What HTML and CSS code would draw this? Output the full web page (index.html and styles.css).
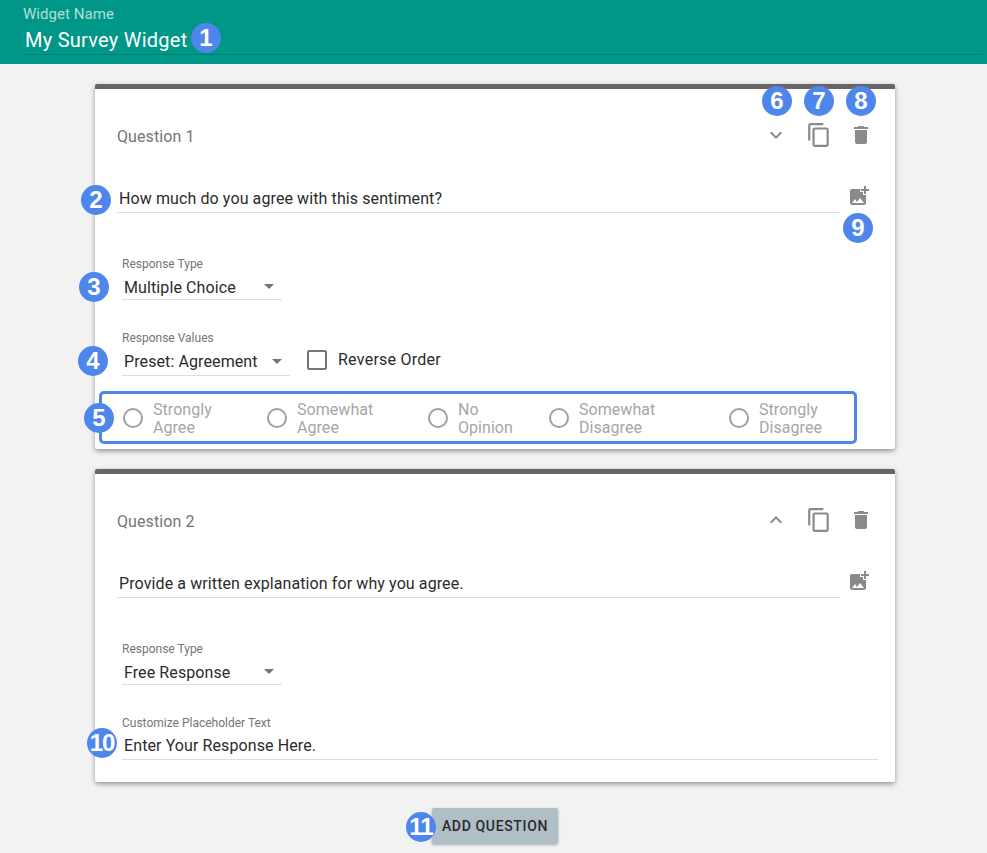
FILE: index.html
```html
<!DOCTYPE html>
<html lang="en">
<head>
    <meta charset="UTF-8">
    <meta name="viewport" content="width=device-width, initial-scale=1.0">
    <title>Survey Widget Builder</title>
    <link rel="stylesheet" href="styles.css">
</head>
<body>

<header class="topbar">
    <div class="topbar-label">Widget Name</div>
    <div class="topbar-field">
        My Survey Widget
        <span class="badge badge-1">1</span>
    </div>
</header>

<main class="content">
    <section class="card">
        <span class="badge badge-2">2</span>
        <span class="badge badge-3">3</span>
        <span class="badge badge-4">4</span>
        <span class="badge badge-5">5</span>
        <span class="badge badge-6">6</span>
        <span class="badge badge-7">7</span>
        <span class="badge badge-8">8</span>
        <span class="badge badge-9">9</span>

        <div class="card-head">
            <div class="card-title">Question 1</div>
            <div class="card-actions">
                <svg class="icon" viewBox="0 0 24 24"><path d="M16.59 8.59L12 13.17 7.41 8.59 6 10l6 6 6-6z"/></svg>
                <svg class="icon icon-copy" viewBox="0 0 24 24"><path d="M16 1H4c-1.1 0-2 .9-2 2v14h2V3h12V1zm3 4H8c-1.1 0-2 .9-2 2v14c0 1.1.9 2 2 2h11c1.1 0 2-.9 2-2V7c0-1.1-.9-2-2-2zm0 16H8V7h11v14z"/></svg>
                <svg class="icon" viewBox="0 0 24 24"><path d="M6 19c0 1.1.9 2 2 2h8c1.1 0 2-.9 2-2V7H6v12zM19 4h-3.5l-1-1h-5l-1 1H5v2h14V4z"/></svg>
            </div>
        </div>

        <div class="question-row">
            <div class="question-text">How much do you agree with this sentiment?</div>
            <svg class="icon icon-image" viewBox="0 0 24 24"><path d="M19 7v2.99s-1.99.01-2 0V7h-3s.01-1.99 0-2h3V2h2v3h3v2h-3zm-3 4V8h-3V5H5c-1.1 0-2 .9-2 2v12c0 1.1.9 2 2 2h12c1.1 0 2-.9 2-2v-8h-3zM5 19l3-4 2 3 3-4 4 5H5z"/></svg>
        </div>

        <div class="field field-first">
            <div class="field-label">Response Type</div>
            <div class="select">
                <span>Multiple Choice</span>
                <i class="select-arrow"></i>
            </div>
        </div>

        <div class="field-row">
            <div class="field">
                <div class="field-label">Response Values</div>
                <div class="select select-preset">
                    <span>Preset: Agreement</span>
                    <i class="select-arrow"></i>
                </div>
            </div>
            <label class="check">
                <i class="check-box"></i>
                Reverse Order
            </label>
        </div>

        <div class="radios">
            <div class="radio"><i class="radio-dot"></i><span>Strongly<br>Agree</span></div>
            <div class="radio"><i class="radio-dot"></i><span>Somewhat<br>Agree</span></div>
            <div class="radio"><i class="radio-dot"></i><span>No<br>Opinion</span></div>
            <div class="radio"><i class="radio-dot"></i><span>Somewhat<br>Disagree</span></div>
            <div class="radio"><i class="radio-dot"></i><span>Strongly<br>Disagree</span></div>
        </div>
    </section>

    <section class="card card-last">
        <span class="badge badge-10">10</span>

        <div class="card-head">
            <div class="card-title">Question 2</div>
            <div class="card-actions">
                <svg class="icon" viewBox="0 0 24 24"><path d="M7.41 15.41L12 10.83l4.59 4.58L18 14l-6-6-6 6z"/></svg>
                <svg class="icon icon-copy" viewBox="0 0 24 24"><path d="M16 1H4c-1.1 0-2 .9-2 2v14h2V3h12V1zm3 4H8c-1.1 0-2 .9-2 2v14c0 1.1.9 2 2 2h11c1.1 0 2-.9 2-2V7c0-1.1-.9-2-2-2zm0 16H8V7h11v14z"/></svg>
                <svg class="icon" viewBox="0 0 24 24"><path d="M6 19c0 1.1.9 2 2 2h8c1.1 0 2-.9 2-2V7H6v12zM19 4h-3.5l-1-1h-5l-1 1H5v2h14V4z"/></svg>
            </div>
        </div>

        <div class="question-row">
            <div class="question-text">Provide a written explanation for why you agree.</div>
            <svg class="icon icon-image" viewBox="0 0 24 24"><path d="M19 7v2.99s-1.99.01-2 0V7h-3s.01-1.99 0-2h3V2h2v3h3v2h-3zm-3 4V8h-3V5H5c-1.1 0-2 .9-2 2v12c0 1.1.9 2 2 2h12c1.1 0 2-.9 2-2v-8h-3zM5 19l3-4 2 3 3-4 4 5H5z"/></svg>
        </div>

        <div class="field field-first">
            <div class="field-label">Response Type</div>
            <div class="select">
                <span>Free Response</span>
                <i class="select-arrow"></i>
            </div>
        </div>

        <div class="field field-text">
            <div class="field-label">Customize Placeholder Text</div>
            <div class="text-value">Enter Your Response Here.</div>
        </div>
    </section>

    <div class="add-row">
        <button class="add-button">
            <span class="badge badge-11">11</span>
            Add Question
        </button>
    </div>
</main>

</body>
</html>
```

FILE: styles.css
```css
* {
    box-sizing: border-box;
}
body {
    font-family: Roboto, "Liberation Sans", Arial, sans-serif;
    margin: 0;
    background: #f2f2f2;
    color: #2b2b2b;
    font-size: 16px;
    letter-spacing: 0.1px;
}

/* top bar */
.topbar {
    height: 64px;
    background: #009688;
    padding: 6px 5px 0 23px;
}
.topbar-label {
    font-size: 15px;
    letter-spacing: 0.05px;
    line-height: 16px;
    color: rgba(255, 255, 255, 0.7);
}
.topbar-field {
    position: relative;
    height: 33px;
    padding: 4px 0 0 2px;
    font-size: 20px;
    letter-spacing: 0.25px;
    line-height: 28px;
    color: white;
    border-bottom: 1px solid #00806f;
}

/* numbered callouts */
.badge {
    position: absolute;
    z-index: 2;
    width: 30px;
    height: 30px;
    border-radius: 50%;
    background: #4f86ec;
    color: white;
    font-family: "Liberation Sans", Arial, sans-serif;
    font-size: 24px;
    font-weight: bold;
    letter-spacing: 0;
    line-height: 30px;
    text-align: center;
    text-transform: none;
}
.badge-1 { left: 168px; top: 1px; }
.badge-2 { left: -14px; top: 96px; }
.badge-3 { left: -16px; top: 183px; }
.badge-4 { left: -17px; top: 257px; }
.badge-5 { left: -11px; top: 314px; }
.badge-6 { left: 667px; top: -3px; }
.badge-7 { left: 709px; top: -3px; }
.badge-8 { left: 751px; top: -3px; }
.badge-9 { left: 748px; top: 124px; }
.badge-10 { left: -8px; top: 254px; letter-spacing: -1px; }
.badge-11 { left: -26px; top: 4px; letter-spacing: -1px; }

/* cards */
.content {
    width: 800px;
    margin-left: 95px;
    padding-top: 20px;
}
.card {
    position: relative;
    height: 365px;
    margin-bottom: 20px;
    padding: 0 22px;
    background: white;
    border-top: 5px solid #666666;
    border-radius: 2px;
    box-shadow: 0 2px 5px rgba(0, 0, 0, 0.4);
}
.card-last {
    height: 313px;
    margin-bottom: 0;
}
.card-head {
    display: flex;
    align-items: center;
    justify-content: space-between;
    height: 94px;
}
.card-title {
    color: #757575;
}
.card-actions {
    display: flex;
    align-items: center;
    gap: 18px;
    margin: -2px 0 0 0;
}
.icon {
    display: block;
    width: 24px;
    height: 24px;
    fill: #8a8a8a;
}
.icon-copy {
    width: 26px;
    height: 26px;
    margin-right: -1px;
}

.question-row {
    display: flex;
    align-items: flex-start;
}
.question-text {
    width: 723px;
    height: 30px;
    padding: 4px 0 0 2px;
    line-height: 24px;
    border-bottom: 1px solid #dedede;
}
.icon-image {
    margin: 1px 0 0 7px;
}

/* form fields */
.field {
    margin-left: 5px;
}
.field-first {
    margin-top: 43px;
}
.field-text {
    margin-top: 30px;
}
.field-label {
    font-size: 12px;
    letter-spacing: 0;
    line-height: 16px;
    color: #757575;
}
.field-row {
    display: flex;
    align-items: flex-end;
    margin-top: 30px;
}
.select {
    display: flex;
    align-items: center;
    justify-content: space-between;
    width: 160px;
    height: 28px;
    padding: 4px 8px 0 2px;
    line-height: 24px;
    border-bottom: 1px solid #dedede;
}
.select-preset {
    width: 168px;
    height: 30px;
    padding-bottom: 1px;
}
.select-arrow {
    width: 0;
    height: 0;
    margin-top: -2px;
    border-left: 5px solid transparent;
    border-right: 5px solid transparent;
    border-top: 5px solid #757575;
}
.text-value {
    width: 756px;
    height: 29px;
    padding: 3px 0 0 2px;
    line-height: 24px;
    border-bottom: 1px solid #dedede;
}
.check {
    display: flex;
    align-items: center;
    gap: 11px;
    margin: 0 0 6px 17px;
    line-height: 20px;
    letter-spacing: 0.25px;
}
.check-box {
    width: 20px;
    height: 20px;
    border: 2px solid #757575;
    border-radius: 2px;
}

/* response options */
.radios {
    display: grid;
    grid-template-columns: 144px 161px 121px 180px 1fr;
    align-items: center;
    width: 758px;
    height: 53px;
    margin: 15px 0 0 -18px;
    padding-left: 21px;
    border: 3px solid #4f86ec;
    border-radius: 5px;
}
.radio {
    display: flex;
    align-items: center;
    gap: 10px;
    font-size: 16px;
    letter-spacing: 0.05px;
    line-height: 18px;
    color: #a6a6a6;
}
.radio span {
    padding-top: 2px;
}
.radio-dot {
    width: 20px;
    height: 20px;
    border: 2px solid #a0a0a0;
    border-radius: 50%;
}

/* add button */
.add-row {
    display: flex;
    justify-content: center;
    padding: 26px 0 9px;
}
.add-button {
    position: relative;
    width: 126px;
    height: 36px;
    padding: 0;
    background: #b0bec5;
    color: #2b2b2b;
    font-family: Roboto, "Liberation Sans", Arial, sans-serif;
    font-size: 14px;
    font-weight: 500;
    letter-spacing: 0.65px;
    text-transform: uppercase;
    border: none;
    border-radius: 2px;
    box-shadow: 0 1px 3px rgba(0, 0, 0, 0.3);
}
```
